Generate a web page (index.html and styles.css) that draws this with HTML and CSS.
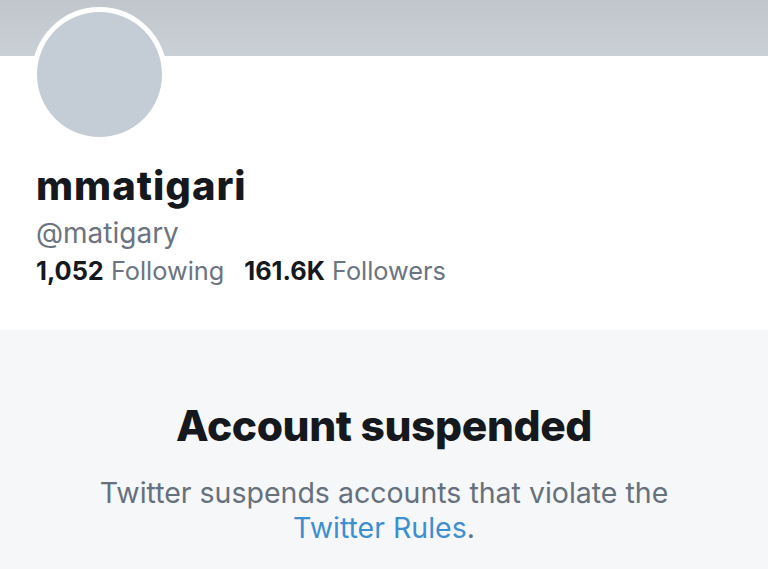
FILE: index.html
```html
<!DOCTYPE html>
<html>
<head>
<meta charset="utf-8">
<link rel="stylesheet" href="styles.css">
</head>
<body>
<div class="page">
  <header class="profile">
    <div class="banner"></div>
    <div class="avatar-wrap"><div class="avatar"></div></div>
    <div class="info">
      <h1 class="name">mmatigari</h1>
      <div class="handle">@matigary</div>
      <div class="stats">
        <span class="stat"><b>1,052</b> Following</span>
        <span class="stat"><b>161.6K</b> Followers</span>
      </div>
    </div>
  </header>
  <section class="suspended">
    <h2 class="title">Account suspended</h2>
    <p class="desc">Twitter suspends accounts that violate the<br><a class="link">Twitter Rules</a>.</p>
  </section>
</div>
</body>
</html>
```
FILE: styles.css
```css
html, body {
  margin: 0;
  padding: 0;
  height: 100%;
}
body {
  font-family: Inter, "Noto Sans", sans-serif;
  background: #f5f7f9;
  overflow: hidden;
}
.page {
  width: 768px;
  height: 569px;
  display: flex;
  flex-direction: column;
}
.profile {
  background: #fff;
  height: 330px;
  position: relative;
  flex-shrink: 0;
}
.banner {
  height: 56px;
  background: linear-gradient(#c0c6cc, #c9d0d6);
}
.avatar-wrap {
  position: absolute;
  left: 32px;
  top: 7px;
  width: 125px;
  height: 125px;
  border: 5px solid #fff;
  border-radius: 50%;
  background: #fff;
}
.avatar {
  width: 100%;
  height: 100%;
  border-radius: 50%;
  background: #c4ccd5;
}
.info {
  padding: 106px 0 0 36px;
}
.name {
  margin: 0;
  font-size: 40px;
  font-weight: 800;
  color: #15181c;
  line-height: 48px;
  letter-spacing: 1px;
}
.handle {
  font-size: 28px;
  color: #6b7480;
  line-height: 36px;
  margin-top: 5px;
}
.stats {
  display: flex;
  gap: 20px;
  font-size: 25.3px;
  color: #6b7480;
  line-height: 30px;
  margin-top: 5px;
}
.stat b {
  color: #15181c;
  font-weight: 700;
}
.suspended {
  flex: 1;
  display: flex;
  flex-direction: column;
  align-items: center;
  padding-top: 72px;
}
.title {
  margin: 0;
  font-size: 42.5px;
  font-weight: 800;
  color: #15181c;
  line-height: 48px;
  letter-spacing: -0.4px;
}
.desc {
  margin: 25px 0 0;
  text-align: center;
  font-size: 28.5px;
  line-height: 35px;
  color: #66717d;
}
.link {
  color: #3f8fd0;
}
```
